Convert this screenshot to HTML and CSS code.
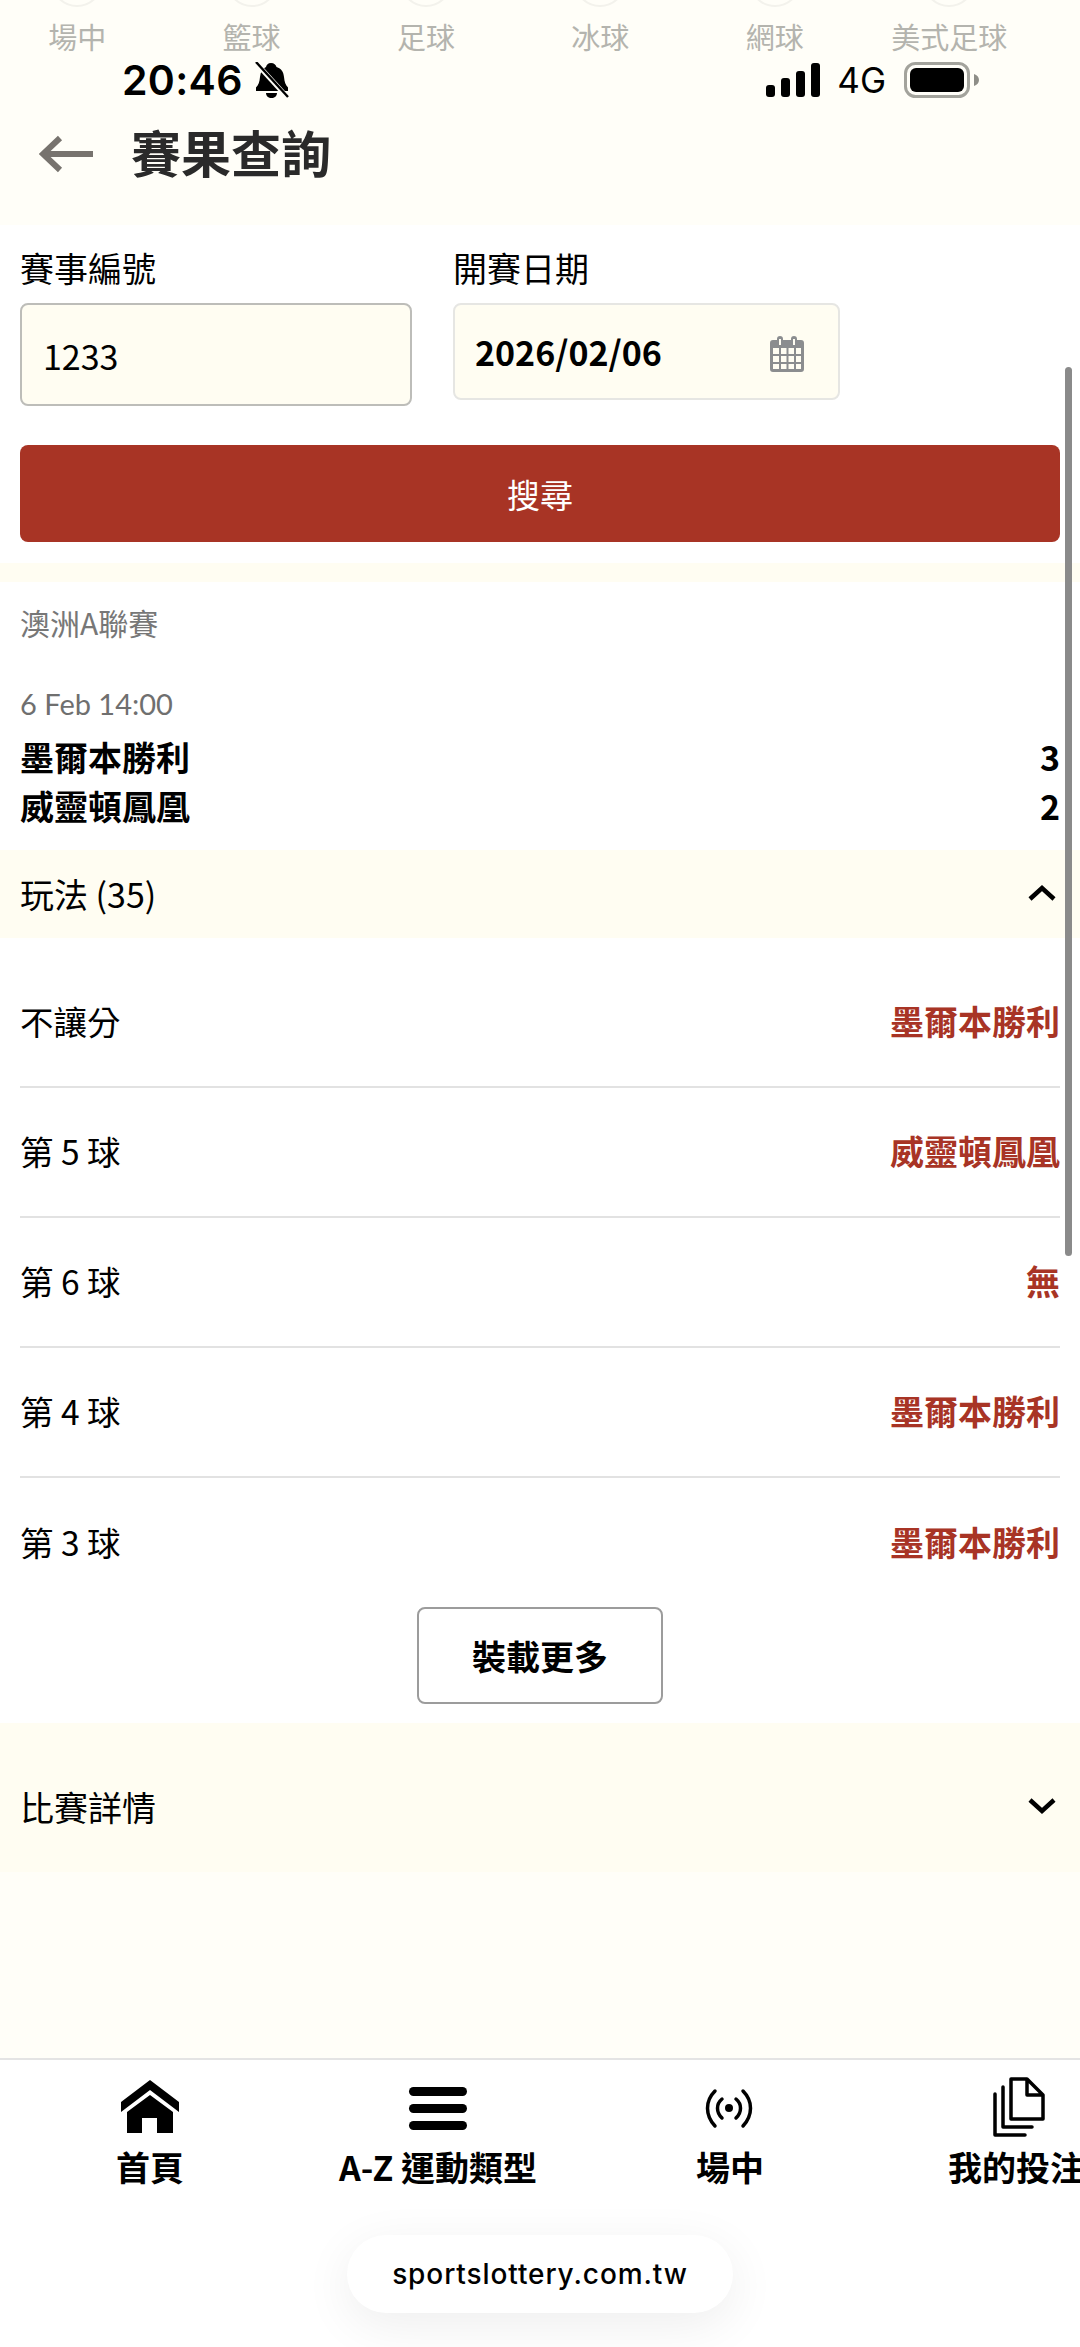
FILE: index.html
```html
<!DOCTYPE html>
<html lang="zh-Hant">
<head>
  <meta charset="UTF-8">
  <meta name="viewport" content="width=device-width, initial-scale=1.0">
  <title>賽果查詢</title>
  <link rel="stylesheet" href="styles.css">
</head>
<body>
  <header class="top">
    <div class="sports">
      <div class="sport"><i></i><span>場中</span></div>
      <div class="sport"><i></i><span>籃球</span></div>
      <div class="sport"><i></i><span>足球</span></div>
      <div class="sport"><i></i><span>冰球</span></div>
      <div class="sport"><i></i><span>網球</span></div>
      <div class="sport"><i></i><span>美式足球</span></div>
    </div>
    <div class="status">
      <div class="status-left">
        <span class="time">20:46</span>
        <svg class="bell" viewBox="0 0 34 36"><path d="M16 1c3 0 5 2 5.500 4 5 1.500 7 5 7.500 10 .5 5 1.500 8 4 10.500V29H1v-3.500c2.500-2.500 3.500-5.500 4-10.500.5-5 2.500-8.500 6-10 .5-2 2-4 5-4zM11 31h11c0 3-2.500 5-5.500 5S11 34 11 31z" fill="#000"/><path d="M1 1l32 35" stroke="#fffef8" stroke-width="5"/><path d="M1 0l32 35" stroke="#000" stroke-width="2.400"/></svg>
      </div>
      <div class="status-right">
        <svg class="signal" viewBox="0 0 55 34"><rect x="0" y="22" width="9" height="12" rx="3"/><rect x="15" y="15" width="9" height="19" rx="3"/><rect x="30" y="8" width="9" height="26" rx="3"/><rect x="45" y="0" width="9" height="34" rx="3"/></svg>
        <span class="net">4G</span>
        <svg class="battery" viewBox="0 0 76 36"><rect x="1.500" y="1.500" width="63" height="33" rx="10" fill="none" stroke="#a3a39c" stroke-width="3"/><rect x="6" y="6" width="54" height="24" rx="6" fill="#000"/><path d="M70 12c3 1 5 3 5 6s-2 5-5 6z" fill="#8e8e88"/></svg>
      </div>
    </div>
    <div class="title-row">
      <svg class="back" viewBox="0 0 54 38"><path d="M21 3L4 19l17 16M5 19h49" fill="none" stroke="#77736e" stroke-width="6"/></svg>
      <h1>賽果查詢</h1>
    </div>
  </header>

  <section class="search">
    <div class="fields">
      <div class="field field-id">
        <label>賽事編號</label>
        <div class="input input-id">1233</div>
      </div>
      <div class="field field-date">
        <label>開賽日期</label>
        <div class="input input-date">
          <span>2026/02/06</span>
          <svg class="cal" viewBox="0 0 34 36"><path d="M3 4h4V3a3 3 0 0 1 6 0v1h8V3a3 3 0 0 1 6 0v1h4a3 3 0 0 1 3 3v26a3 3 0 0 1-3 3H3a3 3 0 0 1-3-3V7a3 3 0 0 1 3-3z" fill="#8b8d8f"/><path d="M9 3h2v6H9zM23 3h2v6h-2z" fill="#fffdf2"/><path d="M3 12h6v6H3zM11 12h5.500v6H11zM18.500 12H24v6h-5.500zM26 12h5v6h-5zM3 20h6v6H3zM11 20h5.500v6H11zM18.500 20H24v6h-5.500zM26 20h5v6h-5zM3 28h6v5H3zM11 28h5.500v5H11zM18.500 28H24v5h-5.500zM26 28h5v5h-5z" fill="#fffdf2"/></svg>
        </div>
      </div>
    </div>
    <button class="btn-search">搜尋</button>
  </section>

  <div class="strip"></div>

  <section class="match">
    <p class="league">澳洲A聯賽</p>
    <p class="kickoff">6 Feb 14:00</p>
    <div class="team"><span>墨爾本勝利</span><span>3</span></div>
    <div class="team"><span>威靈頓鳳凰</span><span>2</span></div>
  </section>

  <div class="bar bar-markets">
    <span>玩法 (35)</span>
    <svg class="chev" viewBox="0 0 30 18"><path d="M3 15L15 4l12 11" fill="none" stroke="#000" stroke-width="4.500"/></svg>
  </div>

  <section class="results">
    <div class="row"><span>不讓分</span><b>墨爾本勝利</b></div>
    <div class="row"><span>第 5 球</span><b>威靈頓鳳凰</b></div>
    <div class="row"><span>第 6 球</span><b>無</b></div>
    <div class="row"><span>第 4 球</span><b>墨爾本勝利</b></div>
    <div class="row"><span>第 3 球</span><b>墨爾本勝利</b></div>
    <button class="btn-more">裝載更多</button>
  </section>

  <section class="details">
    <div class="bar bar-details">
      <span>比賽詳情</span>
      <svg class="chev" viewBox="0 0 30 18"><path d="M3 3l12 11L27 3" fill="none" stroke="#000" stroke-width="4.500"/></svg>
    </div>
  </section>

  <nav class="nav">
    <div class="nav-items">
      <div class="nav-item item-home">
        <svg viewBox="0 0 60 56"><path d="M30 0l29 22v10L30 10 1 32V22z"/><path d="M30 15l23 17v21H37V38H22v15H7V32z"/></svg>
        <span>首頁</span>
      </div>
      <div class="nav-item item-az">
        <svg viewBox="0 0 60 56"><rect x="1" y="7" width="58" height="9" rx="4.500"/><rect x="1" y="24" width="58" height="9" rx="4.500"/><rect x="1" y="41" width="58" height="9" rx="4.500"/></svg>
        <span>A-Z 運動類型</span>
      </div>
      <div class="nav-item item-live">
        <svg viewBox="0 0 60 56"><circle cx="29" cy="28" r="4"/><path class="line" d="M22 19C16 24 16 32 22 38M36 19C42 24 42 32 36 38M15 11C5 21 5 35 15 46M43 11C53 21 53 35 43 46"/></svg>
        <span>場中</span>
      </div>
      <div class="nav-item item-bets">
        <svg viewBox="0 0 60 56"><path class="line" d="M25 -1H41L57 15V39H25zM41 -1V15H57M17 7V47H46M9 14V55H39"/></svg>
        <span>我的投注</span>
      </div>
    </div>
    <div class="url">sportslottery.com.tw</div>
  </nav>

  <div class="scrollbar"></div>
</body>
</html>
```

FILE: styles.css
```css
* {
  box-sizing: border-box;
}

html, body {
  margin: 0;
  padding: 0;
}

body {
  position: relative;
  width: 1080px;
  height: 2347px;
  overflow: hidden;
  background-color: #fff;
  color: #000;
  font-family: "Noto Sans CJK TC", "Noto Sans", sans-serif;
  display: flex;
  flex-direction: column;
}

/* top area */
.top {
  height: 225px;
  background-color: #fffef8;
  overflow: hidden;
}

.sports {
  display: flex;
  height: 60px;
  margin-left: -10px;
}

.sport {
  width: 174.4px;
  display: flex;
  flex-direction: column;
  align-items: center;
  flex: none;
}

.sport i {
  display: block;
  width: 52px;
  height: 52px;
  margin-top: -45px;
  border: 2px solid #f3f2ec;
  border-radius: 50%;
}

.sport span {
  font-size: 29px;
  line-height: 40px;
  margin-top: 9px;
  color: #b4b4ae;
  white-space: nowrap;
}

.status {
  display: flex;
  justify-content: space-between;
  height: 40px;
  padding: 0 100px 0 122px;
}

.status-left, .status-right {
  display: flex;
  align-items: center;
}

.time {
  font-family: Inter, Roboto, sans-serif;
  font-weight: 600;
  font-size: 41px;
  line-height: 40px;
  letter-spacing: 0.3px;
}

.bell {
  width: 34px;
  height: 36px;
  margin-left: 12px;
}

.signal {
  width: 55px;
  height: 34px;
  fill: #000;
}

.net {
  font-family: Inter, Roboto, sans-serif;
  font-size: 35px;
  line-height: 40px;
  margin-left: 16px;
}

.battery {
  width: 76px;
  height: 36px;
  margin-left: 18px;
}

.title-row {
  display: flex;
  align-items: center;
  height: 60px;
  margin-top: 21px;
  padding-left: 39px;
}

.back {
  width: 54px;
  height: 38px;
  flex: none;
  margin-top: 6px;
}

h1 {
  margin: 0 0 0 38px;
  font-size: 50px;
  line-height: 60px;
  font-weight: 700;
  color: #2a2a2a;
}

/* search form */
.search {
  height: 338px;
  padding: 19px 20px 0;
}

.fields {
  display: flex;
  align-items: flex-start;
  gap: 41px;
  height: 179px;
}

.field label {
  display: block;
  font-size: 34px;
  line-height: 48px;
  margin-bottom: 11px;
}

.field-id {
  width: 392px;
}

.field-date {
  width: 387px;
}

.input {
  background-color: #fffdf2;
  border-radius: 8px;
  font-size: 34px;
  display: flex;
  align-items: center;
}

.input-id {
  height: 103px;
  border: 2px solid #bdbdb9;
  padding: 2px 0 0 21px;
}

.input-date {
  height: 97px;
  border: 2px solid #e6e6e3;
  justify-content: space-between;
  padding: 0 34px 0 20px;
  font-weight: 700;
}

.cal {
  width: 34px;
  height: 36px;
  margin-top: 4px;
}

.btn-search {
  display: block;
  width: 100%;
  height: 97px;
  margin-top: 22px;
  border: none;
  border-radius: 8px;
  background-color: #a83425;
  color: #fff;
  font-family: inherit;
  font-size: 33px;
  cursor: pointer;
}

.strip {
  height: 19px;
  background-color: #fffdf2;
}

/* match */
.match {
  height: 268px;
  padding: 0 20px;
}

.league {
  margin: 0;
  padding-top: 19px;
  font-size: 30px;
  line-height: 42px;
  color: #777;
}

.kickoff {
  margin: 40px 0 0;
  font-family: Lato, "Noto Sans", sans-serif;
  font-size: 29px;
  line-height: 42px;
  color: #6f6f6f;
}

.team {
  display: flex;
  justify-content: space-between;
  font-size: 34px;
  font-weight: 700;
  line-height: 49px;
}

.kickoff + .team {
  margin-top: 7px;
}

.bar {
  display: flex;
  justify-content: space-between;
  align-items: center;
  padding: 0 23px 0 20px;
  font-size: 34px;
}

.bar-markets {
  height: 88px;
  padding-bottom: 2px;
  background-color: #fffdf2;
}

.chev {
  width: 30px;
  height: 18px;
}

/* results */
.results {
  height: 785px;
  padding: 20px 20px 0;
}

.row {
  display: flex;
  justify-content: space-between;
  align-items: center;
  height: 130px;
  padding-bottom: 3px;
  border-bottom: 2px solid #e2e2e2;
  font-size: 33.5px;
}

.row:nth-child(5) {
  border-bottom: none;
}

.row b {
  color: #a83425;
  font-size: 34px;
  font-weight: 700;
}

.btn-more {
  display: block;
  width: 246px;
  height: 97px;
  margin: -1px auto 0;
  border: 2px solid #9c9c9c;
  border-radius: 8px;
  background-color: #fff;
  font-family: inherit;
  font-size: 34px;
  font-weight: 700;
  color: #000;
}

/* details */
.details {
  height: 335px;
  background-color: #fffef8;
}

.bar-details {
  height: 149px;
  padding-top: 17px;
  background-color: #fffdf2;
}

/* bottom nav */
.nav {
  position: relative;
  flex: 1;
  overflow: hidden;
  border-top: 2px solid #e4e4e4;
  background-color: #fff;
}

.nav-items {
  display: flex;
  padding-top: 20px;
}

.nav-item {
  flex: none;
  display: flex;
  flex-direction: column;
  align-items: center;
  font-size: 34px;
  font-weight: 700;
  line-height: 46px;
  white-space: nowrap;
}

.nav-item svg {
  width: 60px;
  height: 56px;
  fill: #000;
  overflow: visible;
  margin-bottom: 8px;
}

.nav-item .line {
  fill: none;
  stroke: #000;
  stroke-width: 3.5;
  stroke-linecap: round;
  stroke-linejoin: round;
}

.item-home {
  width: 300px;
}

.item-az {
  width: 276px;
}

.item-live {
  width: 308px;
}

.item-bets {
  width: 264px;
}

.url {
  position: absolute;
  left: 347px;
  top: 175px;
  width: 386px;
  height: 78px;
  border-radius: 39px;
  background-color: #fff;
  box-shadow: 0 12px 50px rgba(0, 0, 0, 0.07);
  font-family: Inter, Roboto, sans-serif;
  font-size: 28px;
  font-weight: 500;
  letter-spacing: 0.9px;
  line-height: 78px;
  text-align: center;
}

.scrollbar {
  position: absolute;
  left: 1065px;
  top: 367px;
  width: 7px;
  height: 889px;
  border-radius: 4px;
  background-color: #8a8a8a;
}
```
